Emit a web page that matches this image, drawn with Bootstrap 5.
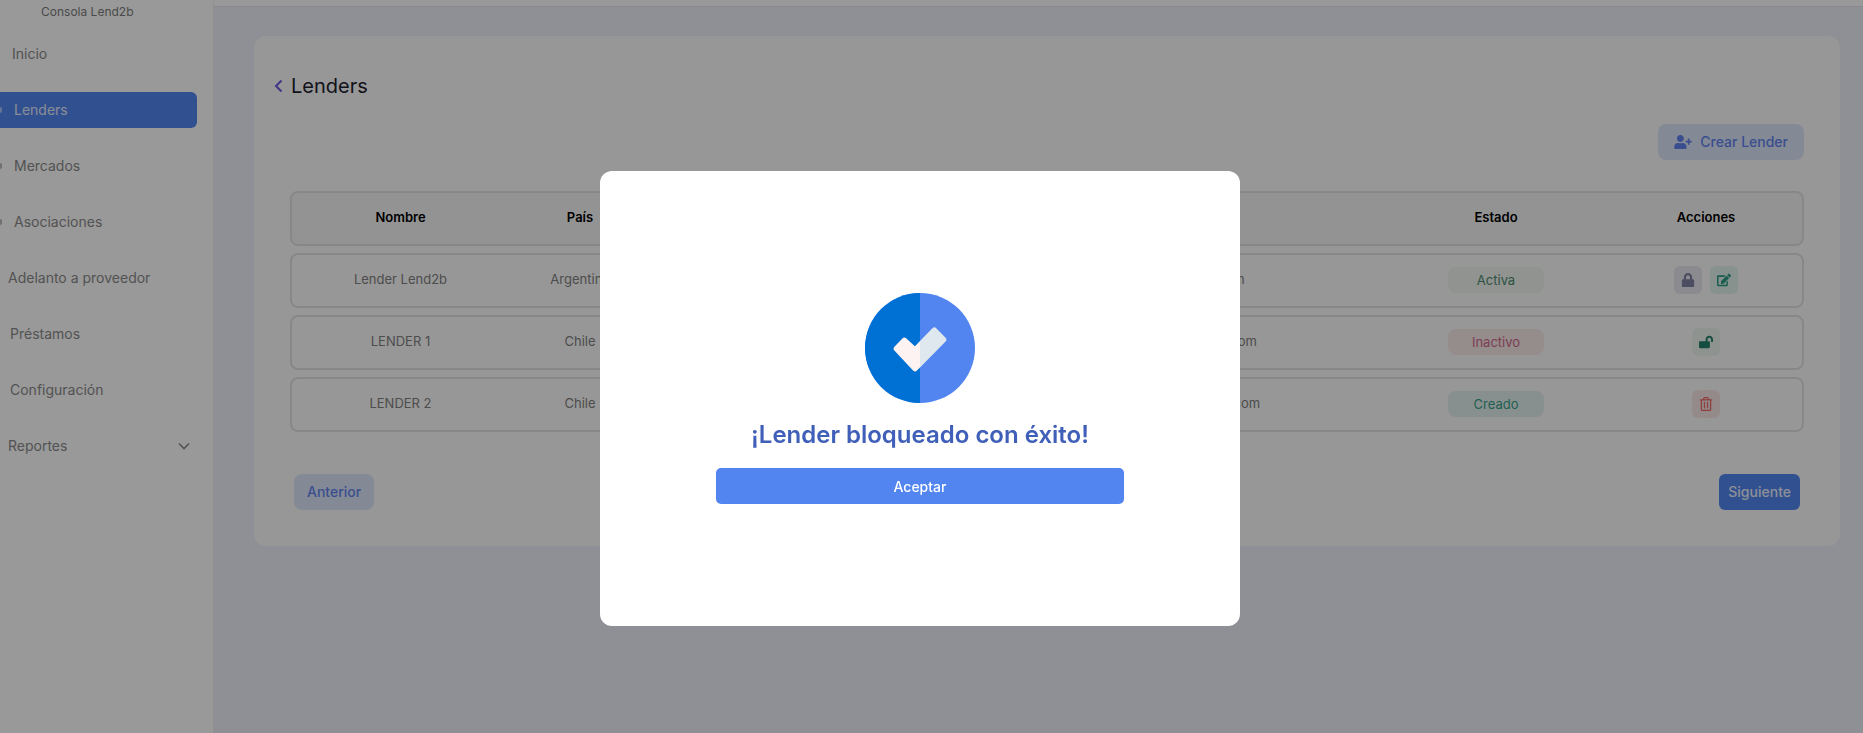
<!DOCTYPE html>
<html lang="es">

<head>
  <meta charset="UTF-8" />
  <title>Lenders</title>
  <link href="https://cdn.jsdelivr.net/npm/bootstrap@5.3.2/dist/css/bootstrap.min.css" rel="stylesheet" />
  <style>
    body {
      font-family: Inter, "Liberation Sans", sans-serif;
      font-size: 14px;
      background: #edf1f8;
      height: 733px;
      overflow: hidden;
    }

    .side-panel {
      width: 214px;
      height: 733px;
      background: #fff;
      border-right: 1px solid #f0f0f0;
    }

    .side-brand {
      font-size: 12px;
      line-height: 18px;
      height: 36px;
      padding-top: 3px;
      padding-left: 41px;
      color: #7c7c7c;
    }

    .side-menu {
      gap: 20px;
      margin-right: 16px;
    }

    .side-link {
      height: 36px;
      line-height: 36px;
      color: #8a8a8a;
      border-radius: 0 6px 6px 0;
      white-space: nowrap;
      text-decoration: none;
    }

    .side-link.is-active {
      background: #5285f0;
      color: #e4ebfb;
    }

    .side-cut {
      width: 2px;
      height: 6px;
      background: currentColor;
      border-radius: 0 2px 2px 0;
      margin-right: 12px;
      opacity: .6;
    }

    .side-nudge {
      margin-left: 2px;
    }

    .side-arrow {
      margin-right: 7px;
    }

    .topstrip {
      height: 7px;
      background: #fff;
      border-bottom: 1px solid #e4e6ea;
    }

    .main-panel {
      background: #fcfcfc;
      border-radius: 12px;
      height: 510px;
      margin: 29px 23px 0 40px;
      padding: 35px 36px 0;
    }

    .panel-title {
      font-size: 20px;
      line-height: 30px;
      color: #20202e;
    }

    .back-chev {
      width: 9px;
      height: 14px;
      margin-left: -16px;
      margin-right: 8px;
    }

    .btn-soft {
      background: #dce6f9;
      color: #6283ee;
      font-weight: 500;
      font-size: 14px;
      border: 0;
      border-radius: 8px;
      height: 36px;
      padding: 0 13px;
    }

    .btn-solid {
      background: #5285f0;
      color: #e9effd;
      font-weight: 500;
      font-size: 14px;
      border: 0;
      border-radius: 6px;
      height: 36px;
      padding: 0 9px;
    }

    .crear-btn {
      width: 146px;
      margin-top: 23px;
      padding: 0 16px 1px;
    }

    .lender-table {
      margin-top: 31px;
      gap: 7.5px;
    }

    .lender-row {
      display: grid;
      grid-template-columns: 217px 142px 291px 440px 228px 1fr;
      align-items: center;
      text-align: center;
      height: 54.5px;
      border: 2px solid #e2e2e2;
      border-radius: 8px;
      color: #808080;
      font-size: 13px;
    }

    .lender-row > div:nth-child(-n+4) {
      padding-bottom: 2px;
    }

    .lender-row.is-head {
      background: #f5f5f5;
      color: #000;
      font-weight: 600;
    }

    .lender-row.is-head > div {
      padding-bottom: 1px;
    }

    .state-tag {
      display: inline-block;
      width: 96px;
      height: 26px;
      line-height: 26px;
      border-radius: 8px;
    }

    .tag-activa { background: #f0f5f0; color: #4f8a70; }
    .tag-inactivo { background: #f8e9ea; color: #d0688a; }
    .tag-creado { background: #e2f1ee; color: #3a9f8a; }

    .act-btn {
      width: 28px;
      height: 28px;
      border-radius: 6px;
    }

    .act-btn svg { width: 14px; height: 14px; }
    .act-lock { background: #e6e6ee; color: #7f7fa5; }
    .act-edit { background: #e2f3ee; color: #2e9c84; }
    .act-open { background: #eff5ef; color: #24806c; }
    .act-trash { background: #f7e7e7; color: #ee6a6a; }

    .pager-row {
      margin: 42px 4px 0;
    }

    .modal-backdrop {
      --bs-backdrop-opacity: .4;
    }

    .done-modal {
      padding-right: 23px;
    }

    .done-dialog {
      width: 640px;
      max-width: 640px;
      margin: 171px auto 0;
    }

    .done-box {
      height: 455px;
      border: 0;
      border-radius: 12px;
      padding-top: 122px;
    }

    .done-title {
      font-size: 24px;
      line-height: 32px;
      font-weight: 600;
      color: #3f5fb8;
      margin-top: 16px;
      margin-bottom: 17px;
    }

    .done-btn {
      width: 408px;
      height: 36px;
      background: #5285f0;
      color: #fff;
      font-size: 14px;
      font-weight: 500;
      border: 0;
      border-radius: 5px;
    }
  </style>
</head>

<body>
  <div class="d-flex">
    <aside class="side-panel flex-shrink-0">
      <div class="side-brand">Consola Lend2b</div>
      <nav class="side-menu d-flex flex-column">
        <a class="side-link ps-2 ms-1" href="#">Inicio</a>
        <a class="side-link is-active d-flex align-items-center" href="#"><span class="side-cut"></span>Lenders</a>
        <a class="side-link d-flex align-items-center" href="#"><span class="side-cut"></span>Mercados</a>
        <a class="side-link d-flex align-items-center" href="#"><span class="side-cut"></span>Asociaciones</a>
        <a class="side-link ps-2" href="#">Adelanto a proveedor</a>
        <a class="side-link ps-2 side-nudge" href="#">Préstamos</a>
        <a class="side-link ps-2 side-nudge" href="#">Configuración</a>
        <a class="side-link ps-2 d-flex justify-content-between align-items-center" href="#">Reportes
          <svg class="side-arrow" width="12" height="8" viewBox="0 0 12 8" fill="none" stroke="currentColor" stroke-width="1.6"><path d="M1 1.5l5 5 5-5" /></svg>
        </a>
      </nav>
    </aside>

    <div class="flex-grow-1">
      <div class="topstrip"></div>
      <section class="main-panel">
        <div class="panel-title d-flex align-items-center">
          <svg class="back-chev" viewBox="0 0 9 14" fill="none" stroke="#6a5ae0" stroke-width="2"><path d="M7.5 1.5L2 7l5.5 5.5" /></svg>
          Lenders
        </div>
        <div class="d-flex justify-content-end">
          <button class="btn-soft crear-btn d-flex align-items-center justify-content-between" type="button">
            <svg width="18" height="14" viewBox="0 0 640 512" fill="currentColor"><path d="M624 208h-64v-64c0-8.8-7.2-16-16-16h-32c-8.8 0-16 7.2-16 16v64h-64c-8.8 0-16 7.2-16 16v32c0 8.8 7.2 16 16 16h64v64c0 8.8 7.2 16 16 16h32c8.8 0 16-7.2 16-16v-64h64c8.8 0 16-7.2 16-16v-32c0-8.8-7.2-16-16-16zm-400 48c70.7 0 128-57.3 128-128S294.7 0 224 0 96 57.3 96 128s57.3 128 128 128zm89.6 32h-16.7c-22.2 10.2-46.9 16-72.9 16s-50.6-5.8-72.9-16h-16.7C60.2 288 0 348.2 0 422.4V464c0 26.5 21.5 48 48 48h352c26.5 0 48-21.5 48-48v-41.6c0-74.2-60.2-134.4-134.4-134.4z" /></svg>
            Crear Lender
          </button>
        </div>

        <div class="lender-table d-flex flex-column">
          <div class="lender-row is-head">
            <div>Nombre</div>
            <div>País</div>
            <div>Tipo</div>
            <div>Correo</div>
            <div>Estado</div>
            <div>Acciones</div>
          </div>
          <div class="lender-row">
            <div>Lender Lend2b</div>
            <div>Argentina</div>
            <div>Lender</div>
            <div>admin.lender@lend2b.com</div>
            <div><span class="state-tag tag-activa">Activa</span></div>
            <div class="d-flex justify-content-center gap-2">
              <span class="act-btn act-lock d-flex align-items-center justify-content-center">
                <svg viewBox="0 0 448 512" fill="currentColor"><path d="M400 224h-24v-72C376 68.2 307.8 0 224 0S72 68.2 72 152v72H48c-26.5 0-48 21.5-48 48v192c0 26.5 21.5 48 48 48h352c26.5 0 48-21.5 48-48V272c0-26.5-21.5-48-48-48zm-104 0H152v-72c0-39.7 32.3-72 72-72s72 32.3 72 72v72z" /></svg>
              </span>
              <span class="act-btn act-edit d-flex align-items-center justify-content-center">
                <svg viewBox="0 0 576 512" fill="currentColor"><path d="M402.6 83.2l90.2 90.2c3.8 3.8 3.8 10 0 13.8L274.4 405.6l-92.8 10.3c-12.4 1.4-22.9-9.1-21.5-21.5l10.3-92.8L388.8 83.2c3.8-3.8 10-3.8 13.8 0zm162-22.9l-48.8-48.8c-15.2-15.2-39.9-15.2-55.2 0l-35.4 35.4c-3.8 3.8-3.8 10 0 13.8l90.2 90.2c3.8 3.8 10 3.8 13.8 0l35.4-35.4c15.2-15.3 15.2-40 0-55.2zM384 346.2V448H64V128h229.8c3.2 0 6.2-1.3 8.5-3.5l40-40c7.6-7.6 2.2-20.5-8.5-20.5H48C21.5 64 0 85.5 0 112v352c0 26.5 21.5 48 48 48h352c26.5 0 48-21.5 48-48V306.2c0-10.7-12.9-16-20.5-8.5l-40 40c-2.2 2.3-3.5 5.3-3.5 8.5z" /></svg>
              </span>
            </div>
          </div>
          <div class="lender-row">
            <div>LENDER 1</div>
            <div>Chile</div>
            <div>Lender</div>
            <div>contactoslender1@lend2b.com</div>
            <div><span class="state-tag tag-inactivo">Inactivo</span></div>
            <div class="d-flex justify-content-center">
              <span class="act-btn act-open d-flex align-items-center justify-content-center">
                <svg viewBox="0 0 576 512" fill="currentColor"><path d="M423.5 0C339.5.3 272 69.5 272 153.5V224H48c-26.5 0-48 21.5-48 48v192c0 26.5 21.5 48 48 48h352c26.5 0 48-21.5 48-48V272c0-26.5-21.5-48-48-48h-48v-71.1c0-39.6 31.7-72.5 71.3-72.9 40-.4 72.7 32.1 72.7 72v80c0 13.3 10.7 24 24 24h32c13.3 0 24-10.7 24-24v-80C576 68 507.5-.3 423.5 0z" /></svg>
              </span>
            </div>
          </div>
          <div class="lender-row">
            <div>LENDER 2</div>
            <div>Chile</div>
            <div>Lender</div>
            <div>contactos.lender2@lend2b.com</div>
            <div><span class="state-tag tag-creado">Creado</span></div>
            <div class="d-flex justify-content-center">
              <span class="act-btn act-trash d-flex align-items-center justify-content-center">
                <svg viewBox="0 0 448 512" fill="currentColor"><path d="M268 416h24a12 12 0 0 0 12-12V188a12 12 0 0 0-12-12h-24a12 12 0 0 0-12 12v216a12 12 0 0 0 12 12zM432 80h-82.41l-34-56.7A48 48 0 0 0 274.41 0H173.59a48 48 0 0 0-41.16 23.3L98.41 80H16A16 16 0 0 0 0 96v16a16 16 0 0 0 16 16h16v336a48 48 0 0 0 48 48h288a48 48 0 0 0 48-48V128h16a16 16 0 0 0 16-16V96a16 16 0 0 0-16-16zM171.84 50.91A6 6 0 0 1 177 48h94a6 6 0 0 1 5.15 2.91L293.61 80H154.39zM368 464H80V128h288zm-212-48h24a12 12 0 0 0 12-12V188a12 12 0 0 0-12-12h-24a12 12 0 0 0-12 12v216a12 12 0 0 0 12 12z" /></svg>
              </span>
            </div>
          </div>
        </div>

        <div class="pager-row d-flex justify-content-between">
          <button class="btn-soft" type="button">Anterior</button>
          <button class="btn-solid" type="button">Siguiente</button>
        </div>
      </section>
    </div>
  </div>

  <!-- Modal de confirmacion, abierto -->
  <div class="modal-backdrop show"></div>
  <div class="modal d-block done-modal" tabindex="-1">
    <div class="modal-dialog done-dialog">
      <div class="modal-content done-box align-items-center">
        <svg width="110" height="110" viewBox="0 0 330 330">
          <defs>
            <clipPath id="halfL"><rect x="0" y="0" width="165" height="330" /></clipPath>
            <clipPath id="halfR"><rect x="165" y="0" width="165" height="330" /></clipPath>
          </defs>
          <circle cx="165" cy="165" r="165" fill="#5285f0" />
          <path d="M0 165a165 165 0 0 1 165-165v330a165 165 0 0 1-165-165z" fill="#0071d4" />
          <g stroke-width="16" stroke-linejoin="round">
            <path clip-path="url(#halfL)" d="M150 227L94 167l24-25 32 29 58-60 28 29z" fill="#fdf3f2" stroke="#fdf3f2" />
            <path clip-path="url(#halfR)" d="M150 227L94 167l24-25 32 29 58-60 28 29z" fill="#dfe8ee" stroke="#dfe8ee" />
          </g>
        </svg>
        <h2 class="done-title">¡Lender bloqueado con éxito!</h2>
        <button class="done-btn" type="button">Aceptar</button>
      </div>
    </div>
  </div>

  <script src="https://cdn.jsdelivr.net/npm/bootstrap@5.3.2/dist/js/bootstrap.bundle.min.js"></script>
</body>

</html>
